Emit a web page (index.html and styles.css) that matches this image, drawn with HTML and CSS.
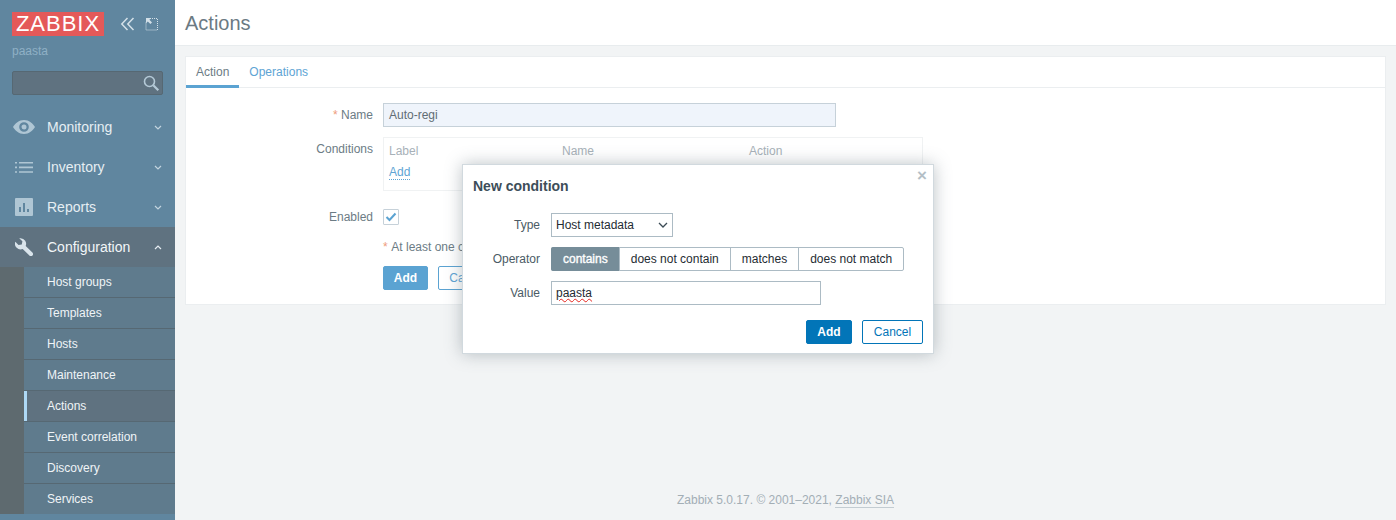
FILE: index.html
```html
<!DOCTYPE html>
<html lang="en">
<head>
<meta charset="utf-8">
<title>Actions</title>
<link rel="stylesheet" href="styles.css">
</head>
<body>
<div class="app">
  <aside class="sidebar">
    <div class="brand">
      <span class="logo">ZABBIX</span>
      <svg class="ctl" width="16" height="16" viewBox="0 0 16 16"><path d="M7.500 2 1.800 8l5.700 6M13.500 2 7.800 8l5.700 6" fill="none" stroke="#d3e0e8" stroke-width="1.500"/></svg>
      <svg class="ctl ctl2" width="14" height="14" viewBox="0 0 14 14"><path d="M5 1.500h7.500V13H1V5" fill="none" stroke="#d3e0e8" stroke-dasharray="1 1"/><path d="M1 1h5.200L4.400 2.800 7 5.400 5.400 7 2.800 4.400 1 6.200z" fill="#d3e0e8"/></svg>
    </div>
    <div class="server">paasta</div>
    <div class="search">
      <svg width="18" height="18" viewBox="0 0 18 18"><circle cx="7.500" cy="7.500" r="5" fill="none" stroke="#b4c9d6" stroke-width="1.600"/><path d="m11.300 11.300 5 5" stroke="#b4c9d6" stroke-width="2.200"/></svg>
    </div>
    <nav class="menu">
      <a class="item">
        <span class="ic"><svg width="22" height="14" viewBox="0 0 22 14"><path fill-rule="evenodd" d="M11 0c5 0 9 3.600 11 7-2 3.400-6 7-11 7S2 10.400 0 7c2-3.400 6-7 11-7zm0 2.200a4.800 4.800 0 1 0 0 9.600 4.800 4.800 0 0 0 0-9.600zM11 4.500a2.500 2.500 0 1 1 0 5 2.500 2.500 0 0 1 0-5z" fill="#afc6d4"/></svg></span>
        <span class="label">Monitoring</span>
        <svg class="arrow" width="8" height="5" viewBox="0 0 8 5"><path d="m1 1 3 3 3-3" fill="none" stroke="#c3d4df" stroke-width="1.200"/></svg>
      </a>
      <a class="item">
        <span class="ic"><svg width="18" height="11" viewBox="0 0 18 11"><path d="M0 0h2v1.600H0zM4 0h14v1.600H4zM0 4.600h2v1.600H0zM4 4.600h14v1.600H4zM0 9.200h2v1.600H0zM4 9.200h14v1.600H4z" fill="#afc6d4"/></svg></span>
        <span class="label">Inventory</span>
        <svg class="arrow" width="8" height="5" viewBox="0 0 8 5"><path d="m1 1 3 3 3-3" fill="none" stroke="#c3d4df" stroke-width="1.200"/></svg>
      </a>
      <a class="item">
        <span class="ic"><svg width="18" height="18" viewBox="0 0 18 18"><path fill-rule="evenodd" d="M1 0h16a1 1 0 0 1 1 1v16a1 1 0 0 1-1 1H1a1 1 0 0 1-1-1V1a1 1 0 0 1 1-1zm3 9v5h2V9zm4-4v9h2V5zm4 6v3h2v-3z" fill="#afc6d4"/></svg></span>
        <span class="label">Reports</span>
        <svg class="arrow" width="8" height="5" viewBox="0 0 8 5"><path d="m1 1 3 3 3-3" fill="none" stroke="#c3d4df" stroke-width="1.200"/></svg>
      </a>
      <a class="item open">
        <span class="ic"><svg width="18" height="18" viewBox="0 0 18 18"><path d="M5.600.2a5.600 5.600 0 0 1 5.100 7.700l6.700 6.700a2.100 2.100 0 0 1-3 3l-6.700-6.700A5.600 5.600 0 0 1 .3 3.800L3.500 7l3.300-.6.600-3.200L4.200.3z" fill="#d9e4eb"/></svg></span>
        <span class="label">Configuration</span>
        <svg class="arrow" width="8" height="5" viewBox="0 0 8 5"><path d="m1 4 3-3 3 3" fill="none" stroke="#e6edf2" stroke-width="1.200"/></svg>
      </a>
      <ul class="sub">
        <li>Host groups</li>
        <li>Templates</li>
        <li>Hosts</li>
        <li>Maintenance</li>
        <li class="current">Actions</li>
        <li>Event correlation</li>
        <li>Discovery</li>
        <li>Services</li>
      </ul>
    </nav>
  </aside>
  <main class="main">
    <header class="head"><h1>Actions</h1></header>
    <section class="card">
      <div class="tabs"><a class="tab active">Action</a><a class="tab">Operations</a></div>
      <div class="form">
        <div class="row row-name">
          <label class="lab"><span class="req">*</span> Name</label>
          <div class="field name-input">Auto-regi</div>
        </div>
        <div class="row row-cond">
          <label class="lab">Conditions</label>
          <div class="cond">
            <div class="cond-head"><span class="c1">Label</span><span class="c2">Name</span><span class="c3">Action</span></div>
            <a class="dotted">Add</a>
          </div>
        </div>
        <div class="row row-en">
          <label class="lab">Enabled</label>
          <span class="check"><svg width="12" height="10" viewBox="0 0 12 10"><path d="m1.500 5 3 3 6-6.500" fill="none" stroke="#5ba3d2" stroke-width="2"/></svg></span>
        </div>
        <div class="note"><span class="req">*</span> At least one condition must be set.</div>
        <div class="btns"><button class="btn primary">Add</button><button class="btn ghost">Cancel</button></div>
      </div>
    </section>
    <footer class="foot">Zabbix 5.0.17. © 2001–2021, <a class="foot-link">Zabbix SIA</a></footer>
  </main>
</div>
<div class="dialog">
  <span class="close">×</span>
  <h2>New condition</h2>
  <div class="d-row">
    <label class="d-lab">Type</label>
    <div class="select">Host metadata<svg width="10" height="6" viewBox="0 0 10 6"><path d="m1 1 4 4 4-4" fill="none" stroke="#3b4b55" stroke-width="1.300"/></svg></div>
  </div>
  <div class="d-row">
    <label class="d-lab">Operator</label>
    <div class="radio"><span class="on">contains</span><span>does not contain</span><span>matches</span><span>does not match</span></div>
  </div>
  <div class="d-row">
    <label class="d-lab">Value</label>
    <div class="value"><span class="spell">paasta</span></div>
  </div>
  <div class="d-foot"><button class="dbtn add">Add</button><button class="dbtn cancel">Cancel</button></div>
</div>
</body>
</html>
```
FILE: styles.css
```css
* { box-sizing: border-box; }
html, body { margin: 0; height: 520px; overflow: hidden; }
body { font: 12px/14px "Liberation Sans", Arial, sans-serif; color: #1f2c33; background: #f2f4f5; }
.app { display: flex; height: 520px; }

.sidebar { width: 175px; flex: none; background: #60869f; color: #e6eef3; }
.brand { display: flex; align-items: center; padding: 12px 0 0 12px; height: 36px; }
.logo { width: 92px; height: 24px; background: #e45959; color: #fff; font-size: 22px; line-height: 24px; text-align: center; letter-spacing: 1px; }
.ctl { margin-left: 16px; }
.ctl2 { margin-left: 9px; }
.server { margin: 8px 0 0 12px; color: #8fb0c5; line-height: 14px; }
.search { margin: 13px 0 0 12px; width: 151px; height: 24px; background: #5f7280; border: 1px solid #566873; border-radius: 2px; display: flex; justify-content: flex-end; align-items: center; padding-right: 2px; }
.menu { margin-top: 12px; }
.item { display: flex; align-items: center; height: 40px; font-size: 14px; color: #e6eef3; position: relative; }
.ic { width: 47px; flex: none; padding-left: 1px; display: flex; align-items: center; justify-content: center; }
.ic svg { flex: none; }
.label { flex: 1; }
.arrow { margin-right: 13px; }
.item.open { background: #5f7280; color: #f2f6f8; }
.sub { list-style: none; margin: 0; padding: 0 0 0 24px; background: #5e6a6f; }
.sub li { height: 31px; padding: 8px 0 0 23px; background: #5f7b8d; border-bottom: 1px solid #566873; color: #eff4f7; }
.sub li:last-child { border-bottom: 0; height: 30px; }
.sub li.current { background: #5f7280; box-shadow: inset 3px 0 0 #aed9f5; }

.main { flex: 1; display: flex; flex-direction: column; min-width: 0; }
.head { height: 46px; background: #fff; border-bottom: 1px solid #e8ecee; padding: 11px 0 0 10px; }
h1 { margin: 0; font-size: 20px; line-height: 24px; font-weight: 400; color: #6b7a83; }
.card { margin: 10px 10px 0; height: 249px; background: #fff; border: 1px solid #ebeef0; position: relative; }
.tabs { display: flex; height: 31px; border-bottom: 1px solid #ebeef0; }
.tab { padding: 8px 10px 0; color: #5ea4d4; height: 31px; }
.tab.active { color: #6c7c85; border-bottom: 3px solid #5ba3d2; }
.form { position: relative; }
.row { display: flex; }
.lab { width: 187px; text-align: right; color: #6c7c85; flex: none; }
.req { color: #ee9b7c; }
.row-name { margin-top: 15px; align-items: center; }
.field { margin-left: 10px; width: 453px; height: 24px; background: #eff4fb; border: 1px solid #c6d1d9; padding: 4px 5px; color: #5f6d75; }
.row-cond { margin-top: 10px; }
.row-cond .lab { padding-top: 5px; }
.cond { margin-left: 10px; width: 540px; height: 54px; border: 1px solid #f0f2f3; padding: 6px 5px; color: #a7b1b8; }
.cond-head { display: flex; }
.c1 { width: 173px; }
.c2 { width: 187px; }
.dotted { display: inline-block; margin-top: 8px; color: #5ea4d4; border-bottom: 1px dotted #5ea4d4; line-height: 13px; }
.row-en { margin-top: 18px; align-items: center; }
.check { margin-left: 10px; width: 16px; height: 16px; border: 1px solid #c6d1d9; border-radius: 1px; display: flex; align-items: center; justify-content: center; }
.note { margin: 15px 0 0 197px; color: #6c7c85; }
.note .req { margin-right: 1px; }
.btns { display: flex; gap: 10px; margin: 12px 0 0 197px; }
.btn { height: 24px; font: 12px "Liberation Sans", Arial, sans-serif; border-radius: 2px; padding: 0; }
.primary { width: 45px; background: #5ba3d2; border: 1px solid #5ba3d2; color: #fff; font-weight: 700; }
.ghost { width: 60px; background: #fff; border: 1px solid #5ba3d2; color: #5ea4d4; }
.foot { margin-top: auto; height: 27px; text-align: center; color: #a3aeb5; }
.foot-link { border-bottom: 1px solid #c3ccd2; }

.dialog { position: absolute; left: 462px; top: 164px; width: 472px; height: 190px; background: #fff; border: 1px solid #d1d9de; box-shadow: 0 0 16px rgba(90,105,115,.4); padding: 0 10px; }
.close { position: absolute; right: 6px; top: 3px; color: #b4bfc6; font-size: 17px; line-height: 16px; font-weight: 700; }
h2 { margin: 0; padding: 13px 0 0; font-size: 14px; line-height: 16px; font-weight: 700; color: #3d4e59; }
.d-row { display: flex; align-items: center; height: 24px; margin-top: 10px; }
h2 + .d-row { margin-top: 19px; }
.d-lab { width: 67px; text-align: right; color: #4b5b65; flex: none; }
.select { margin-left: 11px; width: 122px; height: 24px; border: 1px solid #acbbc4; display: flex; align-items: center; justify-content: space-between; padding: 0 4px; color: #1f2c33; }
.radio { margin-left: 11px; display: flex; height: 24px; border: 1px solid #acbbc4; border-radius: 2px; }
.radio span { display: flex; align-items: center; padding: 0 11px; border-left: 1px solid #acbbc4; color: #1f2c33; }
.radio span:first-child { border-left: 0; }
.radio .on { background: #768d99; color: #fff; -webkit-text-stroke: .35px #fff; margin: -1px 0 -1px -1px; padding-left: 12px; border-radius: 2px 0 0 2px; }
.value { margin-left: 11px; width: 270px; height: 24px; border: 1px solid #acbbc4; padding: 4px 4px; }
.spell { text-decoration: underline wavy #e5261f; text-decoration-thickness: 1px; }
.d-foot { display: flex; justify-content: flex-end; gap: 10px; margin-top: 15px; }
.dbtn { height: 24px; border-radius: 2px; font: 12px "Liberation Sans", Arial, sans-serif; padding: 0; }
.add { width: 46px; background: #0275b8; border: 1px solid #0275b8; color: #fff; font-weight: 700; }
.cancel { width: 61px; background: #fff; border: 1px solid #0275b8; color: #0275b8; }
```
